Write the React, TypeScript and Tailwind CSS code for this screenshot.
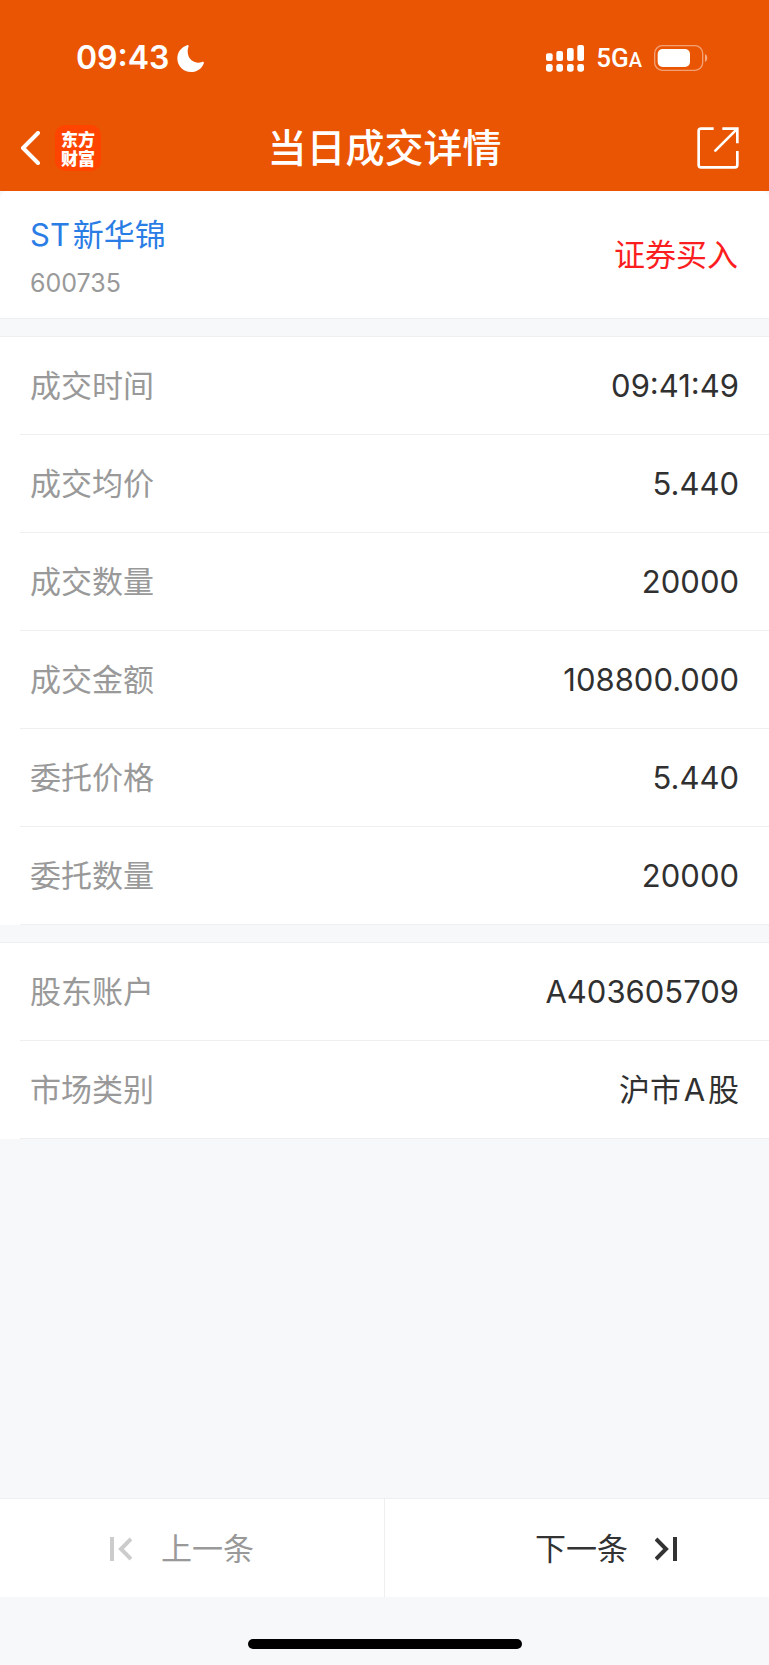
import React from "react";

const tradeRows = [
  { label: "成交时间", value: "09:41:49" },
  { label: "成交均价", value: "5.440" },
  { label: "成交数量", value: "20000" },
  { label: "成交金额", value: "108800.000" },
  { label: "委托价格", value: "5.440" },
  { label: "委托数量", value: "20000" },
];

const accountRows = [
  { label: "股东账户", value: "A403605709" },
  { label: "市场类别", value: "沪市\u200AA\u200A股" },
];

const StatusBar: React.FC = () => {
  return (
    <div className="flex h-[44px] items-center justify-between pl-[76px] pr-[61px]">
      <div className="flex items-center gap-2">
        <span className="text-[32px] leading-[44px] font-semibold">09:43</span>
        <svg className="h-[27px] w-[27px]" viewBox="0 0 78 78" fill="currentColor">
          <path d="M29 1C32-1 35 2 33 5C28 21 32 35 42 44C51 51 62 53 72 49C76 47 79 50 77 54C71 69 57 78 41 78C18 78 1 61 1 39C1 21 12 7 29 1Z" />
        </svg>
      </div>
      <div className="flex items-center">
        <svg className="h-[27px] w-[38px]" viewBox="0 0 114 81" fill="currentColor">
          <rect x="0" y="25" width="20" height="23" rx="6" />
          <rect x="31" y="18" width="20" height="30" rx="6" />
          <rect x="63" y="9" width="20" height="39" rx="6" />
          <rect x="94" y="0" width="20" height="48" rx="6" />
          <rect x="0" y="57" width="20" height="23" rx="7" />
          <rect x="31" y="57" width="20" height="23" rx="7" />
          <rect x="63" y="57" width="20" height="23" rx="7" />
          <rect x="94" y="57" width="20" height="23" rx="7" />
        </svg>
        <span className="ml-3 pt-[2px] font-[Roboto,sans-serif] text-[26px] leading-[40px] font-medium">
          5G<span className="text-[20px]">A</span>
        </span>
        <svg className="ml-3 h-[26px] w-[54px]" viewBox="0 0 162 78" fill="none">
          <rect x="2" y="2" width="144" height="74" rx="23" stroke="white" strokeOpacity="0.45" strokeWidth="4" />
          <rect x="11" y="12" width="97" height="54" rx="15" fill="white" />
          <path d="M153 27C162 31 162 47 153 51Z" fill="white" fillOpacity="0.5" />
        </svg>
      </div>
    </div>
  );
};

const NavBar: React.FC = () => {
  return (
    <div className="grid h-[86px] grid-cols-[1fr_auto_1fr] items-center px-5">
      <div className="flex items-center gap-[15px]">
        <button type="button" aria-label="返回">
          <svg className="h-[34px] w-5" viewBox="0 0 20 34" fill="none" stroke="currentColor" strokeWidth="4" strokeLinecap="round" strokeLinejoin="round">
            <path d="M18 2L3 17L18 32" />
          </svg>
        </button>
        <div className="flex h-[46px] w-[46px] items-center justify-center rounded-[10px] bg-[#ff4400] font-['Noto_Sans_CJK_SC',sans-serif] text-[17px] leading-[19px] font-black">
          <p className="w-[34px] break-all">东方财富</p>
        </div>
      </div>
      <h1 className="text-[39px] leading-[46px] font-medium">当日成交详情</h1>
      <button type="button" aria-label="分享" className="mr-[10px] justify-self-end">
        <svg className="h-[42px] w-[42px]" viewBox="0 0 126 126" fill="none" stroke="currentColor" strokeWidth="8">
          <path d="M50 5H12Q5 5 5 12V114Q5 121 12 121H114Q121 121 121 114V72" />
          <path d="M76 5H121V49" />
          <path d="M119 7L55 71" strokeLinecap="round" />
        </svg>
      </button>
    </div>
  );
};

const Rows: React.FC<{ rows: { label: string; value: string }[] }> = ({ rows }) => {
  return (
    <dl className="bg-white pl-5">
      {rows.map((row) => (
        <div key={row.label} className="flex h-[98px] items-center justify-between border-b border-[#eeeff1] pl-[10px] pr-[30px]">
          <dt className="text-[#999999]">{row.label}</dt>
          <dd className="text-[#303030]">{row.value}</dd>
        </div>
      ))}
    </dl>
  );
};

const App: React.FC = () => {
  return (
    <div className="flex min-h-screen flex-col bg-[#f7f8fa] font-[Inter,'Noto_Sans_CJK_SC',sans-serif] text-[31px] leading-[44px]">
      <header className="flex flex-col gap-[25px] bg-[#ea5503] pt-9 text-white">
        <StatusBar />
        <NavBar />
      </header>

      <main>
        <section className="flex items-center justify-between rounded-t-lg bg-white py-4 pl-[30px] pr-[31px]">
          <div className="pt-[6px]">
            <h2 className="text-[#2b7de6]">ST{"\u200A"}新华锦</h2>
            <p className="mt-2 text-[25px] leading-[37px] text-[#999999]">600735</p>
          </div>
          <span className="text-[#fb1d20]">证券买入</span>
        </section>
        <div className="h-[19px] border-y border-[#eeeff1]" />
        <Rows rows={tradeRows} />
        <div className="h-[18px] border-b border-[#eeeff1]" />
        <Rows rows={accountRows} />
      </main>

      <footer className="mt-auto">
        <div className="grid grid-cols-2 border-t border-[#eeeff1] bg-white">
          <button type="button" className="flex h-[98px] items-center gap-[29px] border-r border-[#eeeff1] pt-[2px] pl-[110px] text-[#999999]">
            <svg className="h-6 w-[22px]" viewBox="0 0 22 24" fill="none" stroke="#cccccc" strokeWidth="4">
              <path d="M2 0V24M21 2L11 12L21 22" />
            </svg>
            上一条
          </button>
          <button type="button" className="flex h-[98px] items-center justify-end gap-[27px] pt-[2px] pr-[92px] text-[#333333]">
            下一条
            <svg className="h-6 w-[22px]" viewBox="0 0 22 24" fill="none" stroke="currentColor" strokeWidth="4">
              <path d="M20 0V24M1 2L11 12L1 22" />
            </svg>
          </button>
        </div>
        <div className="flex justify-center pt-[42px] pb-4">
          <div className="h-[10px] w-[274px] rounded-full bg-black" />
        </div>
      </footer>
    </div>
  );
};

export default App;
